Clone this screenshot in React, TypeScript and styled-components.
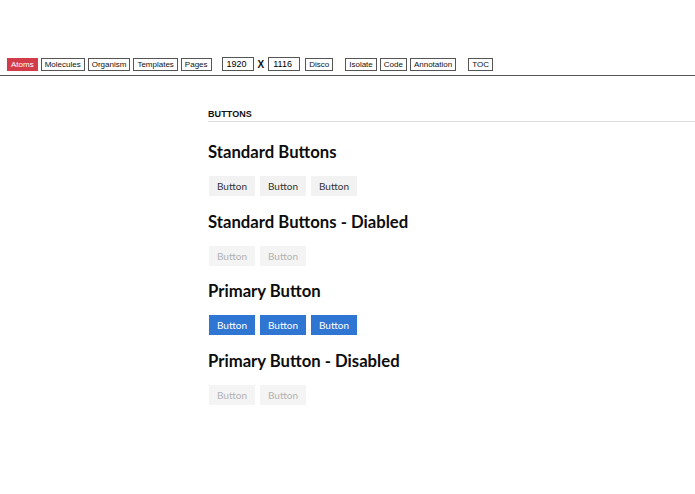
import * as React from "react";
import styled, { createGlobalStyle } from "styled-components";

const GlobalStyle = createGlobalStyle`
  html, body {
    margin: 0;
    padding: 0;
    background: #fff;
  }
  body {
    font-family: Lato, "Noto Sans", sans-serif;
    color: #111;
  }
`;

const Toolbar = styled.div`
  display: flex;
  align-items: center;
  margin-top: 58px;
  padding: 0 0 4px 7px;
  border-bottom: 1px solid #555;
  font-family: "Liberation Sans", Arial, sans-serif;
`;

const Group = styled.div<{ $gap?: number }>`
  display: flex;
  align-items: center;
  gap: 3px;
  margin-left: ${(p) => p.$gap ?? 0}px;
`;

const ToolButton = styled.button<{ $active?: boolean }>`
  height: 13px;
  padding: 0 3px;
  font-family: inherit;
  font-size: 8px;
  line-height: 11px;
  color: ${(p) => (p.$active ? "#fff" : "#111")};
  background: ${(p) => (p.$active ? "#d23b48" : "#fff")};
  border: 1px solid ${(p) => (p.$active ? "#d23b48" : "#555")};
  border-radius: 0;
  cursor: pointer;
`;

const SizeInput = styled.input`
  width: 32px;
  height: 14px;
  box-sizing: border-box;
  padding: 0 4px;
  font-family: inherit;
  font-size: 9px;
  border: 1px solid #555;
  border-radius: 0;
  margin-top: -2px;
`;

const Times = styled.span`
  font-size: 10px;
  font-weight: 700;
  margin: 0 1px;
`;

const Content = styled.main`
  margin-left: 208px;
  padding-top: 33px;
`;

const SectionLabel = styled.h5`
  margin: 0 0 18px;
  padding-bottom: 2px;
  font-family: "Liberation Sans", Arial, sans-serif;
  font-size: 9px;
  font-weight: 700;
  letter-spacing: 0.01em;
  color: #111;
  border-bottom: 1px solid #ddd;
`;

const Section = styled.section`
  margin-bottom: 13.5px;
`;

const Heading = styled.h2`
  margin: 0 0 12px;
  font-size: 16.7px;
  line-height: 24px;
  font-weight: 700;
  color: #0d0d0d;
`;

const Row = styled.div`
  display: flex;
  gap: 5px;
  padding-left: 1px;
`;

const Button = styled.button<{ $primary?: boolean }>`
  height: 20px;
  padding: 0 8px;
  font-family: Lato, "Noto Sans", sans-serif;
  font-size: 10px;
  border: 0;
  border-radius: 0;
  color: ${(p) => (p.$primary ? "#fff" : "#333")};
  background: ${(p) => (p.$primary ? "#2f76d2" : "#f2f2f2")};
  cursor: pointer;

  &:disabled {
    color: #b3b3b3;
    background: #f4f4f4;
    cursor: default;
  }
`;

const sections = [
  { title: "Standard Buttons", count: 3, primary: false, disabled: false },
  { title: "Standard Buttons - Diabled", count: 2, primary: false, disabled: true },
  { title: "Primary Button", count: 3, primary: true, disabled: false },
  { title: "Primary Button - Disabled", count: 2, primary: true, disabled: true },
];

export default function App() {
  return (
    <>
      <GlobalStyle />
      <Toolbar>
        <Group>
          <ToolButton $active>Atoms</ToolButton>
          <ToolButton>Molecules</ToolButton>
          <ToolButton>Organism</ToolButton>
          <ToolButton>Templates</ToolButton>
          <ToolButton>Pages</ToolButton>
        </Group>
        <Group $gap={10}>
          <SizeInput defaultValue="1920" />
          <Times>X</Times>
          <SizeInput defaultValue="1116" />
        </Group>
        <Group $gap={5}>
          <ToolButton>Disco</ToolButton>
        </Group>
        <Group $gap={12}>
          <ToolButton>Isolate</ToolButton>
          <ToolButton>Code</ToolButton>
          <ToolButton>Annotation</ToolButton>
        </Group>
        <Group $gap={12}>
          <ToolButton>TOC</ToolButton>
        </Group>
      </Toolbar>
      <Content>
        <SectionLabel>BUTTONS</SectionLabel>
        {sections.map((s) => (
          <Section key={s.title}>
            <Heading>{s.title}</Heading>
            <Row>
              {Array.from({ length: s.count }).map((_, i) => (
                <Button key={i} $primary={s.primary} disabled={s.disabled}>
                  Button
                </Button>
              ))}
            </Row>
          </Section>
        ))}
      </Content>
    </>
  );
}
